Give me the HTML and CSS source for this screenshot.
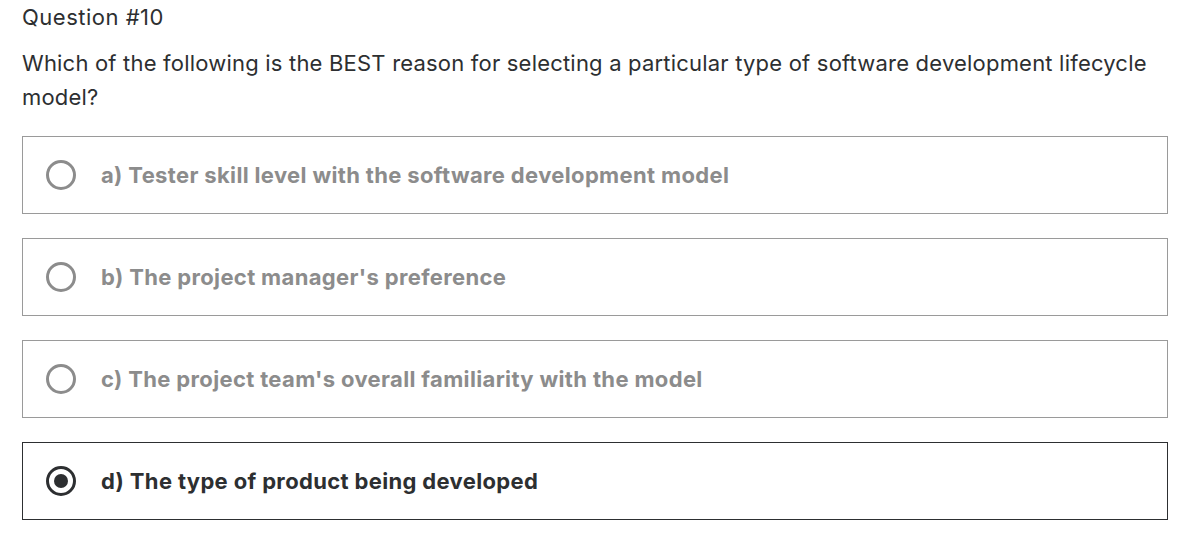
FILE: index.html
```html
<!DOCTYPE html>
<html lang="en">
<head>
    <meta charset="UTF-8">
    <meta name="viewport" content="width=device-width, initial-scale=1.0">
    <title>Question #10</title>
    <link rel="stylesheet" href="styles.css">
</head>
<body>
    <div id="wrap">
        <h2 class="qnum">Question #10</h2>
        <p class="qtext">Which of the following is the BEST reason for selecting a particular type of software development lifecycle model?</p>
        <ul class="answers">
            <li class="answer">
                <span class="radio"></span>
                <span class="label">a) Tester skill level with the software development model</span>
            </li>
            <li class="answer">
                <span class="radio"></span>
                <span class="label">b) The project manager's preference</span>
            </li>
            <li class="answer">
                <span class="radio"></span>
                <span class="label">c) The project team's overall familiarity with the model</span>
            </li>
            <li class="answer checked">
                <span class="radio"></span>
                <span class="label">d) The type of product being developed</span>
            </li>
        </ul>
    </div>
</body>
</html>
```

FILE: styles.css
```css
*{margin:0; padding:0; box-sizing:border-box;}
li{list-style:none;}
body{
    font-family: Inter, "Noto Sans", sans-serif;
    color:#2d2f31;
    background:#fff;
}
#wrap{padding:4px 18px 0 22px;}

.qnum{
    font-size:22px;
    font-weight:400;
    line-height:26px;
    letter-spacing:0.5px;
}
.qtext{
    margin-top:16px;
    font-size:22px;
    line-height:34px;
    letter-spacing:0.2px;
}

.answers{
    margin-top:22px;
    display:flex;
    flex-direction:column;
    gap:24px;
}
.answer{
    height:78px;
    border:1px solid #9a9a9a;
    display:flex;
    align-items:center;
    padding-left:23px;
    gap:25px;
    color:#8c8c8c;
}
.radio{
    width:30px;
    height:30px;
    border:3px solid #8c8c8c;
    border-radius:50%;
    display:flex;
    align-items:center;
    justify-content:center;
}
.label{
    font-size:22px;
    font-weight:700;
    letter-spacing:0.35px;
}

.checked{
    border-color:#2d2f31;
    color:#2d2f31;
}
.checked .radio{border-color:#2d2f31;}
.checked .radio::after{
    content:"";
    width:14px;
    height:14px;
    border-radius:50%;
    background:#2d2f31;
}
```
